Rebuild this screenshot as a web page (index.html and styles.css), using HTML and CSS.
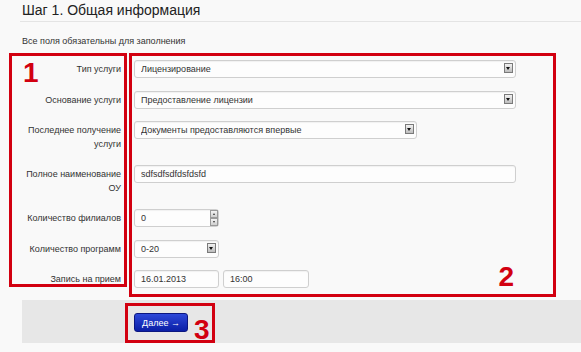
FILE: index.html
```html
<!DOCTYPE html>
<html lang="ru">
<head>
  <meta charset="UTF-8">
  <title>Шаг 1. Общая информация</title>
  <link rel="stylesheet" href="styles.css">
</head>
<body>

  <h1 class="title">Шаг 1. Общая информация</h1>
  <p class="note">Все поля обязательны для заполнения</p>

  <div class="form">
    <div class="labels mark">
      <span class="mark-num num-1">1</span>
      <div class="row"><label>Тип услуги</label></div>
      <div class="row"><label>Основание услуги</label></div>
      <div class="row row-tall"><label>Последнее получение<br>услуги</label></div>
      <div class="row row-tall"><label>Полное наименование<br>ОУ</label></div>
      <div class="row"><label>Количество филиалов</label></div>
      <div class="row"><label>Количество программ</label></div>
      <div class="row"><label>Запись на прием</label></div>
    </div>

    <div class="fields mark">
      <span class="mark-num num-2">2</span>
      <div class="row">
        <div class="select-wrap wide">
          <select class="field"><option>Лицензирование</option></select>
          <span class="arrow"></span>
        </div>
      </div>
      <div class="row">
        <div class="select-wrap wide">
          <select class="field"><option>Предоставление лицензии</option></select>
          <span class="arrow"></span>
        </div>
      </div>
      <div class="row row-tall">
        <div class="select-wrap medium">
          <select class="field"><option>Документы предоставляются впервые</option></select>
          <span class="arrow"></span>
        </div>
      </div>
      <div class="row row-tall">
        <input class="field wide" type="text" value="sdfsdfsdfdsfdsfd">
      </div>
      <div class="row">
        <div class="select-wrap small">
          <input class="field" type="text" value="0">
          <span class="spin"><i class="up"></i><i class="down"></i></span>
        </div>
      </div>
      <div class="row">
        <div class="select-wrap small">
          <select class="field"><option>0-20</option></select>
          <span class="arrow"></span>
        </div>
      </div>
      <div class="row row-pair">
        <input class="field small" type="text" value="16.01.2013">
        <input class="field small" type="text" value="16:00">
      </div>
    </div>
  </div>

  <div class="footer">
    <div class="btn-box mark">
      <button class="next-btn">Далее →</button>
      <span class="mark-num num-3">3</span>
    </div>
  </div>

</body>
</html>
```

FILE: styles.css
```css
body {
  margin: 0;
  background-color: #f9f9f9;
  font-family: 'Liberation Sans', Arial, sans-serif;
  color: #333;
}

.title {
  margin: 0 0 0 20px;
  padding: 2px 0 3px 2px;
  font-size: 14px;
  line-height: 16px;
  font-weight: normal;
  color: #222;
  border-bottom: 1px solid #e4e4e4;
}

.note {
  margin: 13px 0 6px 22px;
  font-size: 9px;
  line-height: 12px;
  color: #333;
}

.form {
  display: flex;
  align-items: flex-start;
  gap: 2px;
  margin-left: 9px;
}

.mark {
  position: relative;
  box-sizing: border-box;
  border: 3px solid #d20010;
}

.mark-num {
  position: absolute;
  font-size: 28px;
  line-height: 1;
  font-weight: bold;
  color: #d20010;
}

.num-1 {
  left: 11px;
  top: 3px;
}

.num-2 {
  right: 39px;
  top: 207px;
}

.num-3 {
  left: 66px;
  top: 10px;
}

.labels {
  width: 118px;
  height: 234px;
  padding: 4px 3px 0 0;
  text-align: right;
}

.fields {
  width: 427px;
  height: 244px;
  padding: 4px 0 0 2px;
}

.row {
  height: 30.5px;
}

.row-tall {
  height: 44px;
}

.row-pair {
  display: flex;
  gap: 4px;
}

.labels label {
  display: block;
  padding-top: 2px;
  font-size: 9px;
  line-height: 14px;
  color: #333;
}

.field {
  display: block;
  box-sizing: border-box;
  width: 100%;
  height: 18px;
  margin: 0;
  padding: 0 6px;
  border: 1px solid #cfcfcf;
  border-radius: 3px;
  background: #fdfdfd;
  box-shadow: inset 0 1px 1px rgba(0, 0, 0, 0.05);
  font-family: 'Liberation Sans', Arial, sans-serif;
  font-size: 9px;
  color: #333;
  appearance: none;
  outline: none;
}

.select-wrap {
  position: relative;
}

.wide {
  width: 382px;
}

.medium {
  width: 283px;
}

.small {
  width: 85px;
}

.row-pair .small + .small {
  width: 86px;
}

.arrow {
  position: absolute;
  right: 3px;
  top: 3px;
  width: 9px;
  height: 10px;
  box-sizing: border-box;
  border: 1px solid #7a7a7a;
  background: linear-gradient(#f2f2f2, #bdbdbd);
}

.arrow::after {
  content: "";
  position: absolute;
  left: 1px;
  top: 3px;
  border-left: 2.5px solid transparent;
  border-right: 2.5px solid transparent;
  border-top: 3px solid #111;
}

.spin {
  position: absolute;
  right: 1px;
  top: 1px;
  display: flex;
  flex-direction: column;
  gap: 0;
}

.spin i {
  position: relative;
  display: block;
  width: 8px;
  height: 8px;
  box-sizing: border-box;
  border: 1px solid #9a9a9a;
  background: linear-gradient(#f4f4f4, #cfcfcf);
}

.spin i::after {
  content: "";
  position: absolute;
  left: 1.5px;
  top: 2px;
  border-left: 1.5px solid transparent;
  border-right: 1.5px solid transparent;
}

.spin .up::after {
  border-bottom: 2px solid #333;
}

.spin .down::after {
  border-top: 2px solid #333;
}

.footer {
  box-sizing: border-box;
  height: 43px;
  margin: 3px 0 0 22px;
  padding-top: 3px;
  background-color: #e7e7e7;
}

.btn-box {
  width: 90px;
  height: 40px;
  margin-left: 103px;
}

.next-btn {
  display: block;
  width: 54px;
  height: 19px;
  margin: 7px 0 0 6px;
  padding: 0;
  border: 1px solid #0b1680;
  border-radius: 3px;
  background: linear-gradient(#2d48d8, #0a1ea6);
  font-family: 'Liberation Sans', Arial, sans-serif;
  font-size: 9px;
  color: #fff;
  cursor: pointer;
}
```
